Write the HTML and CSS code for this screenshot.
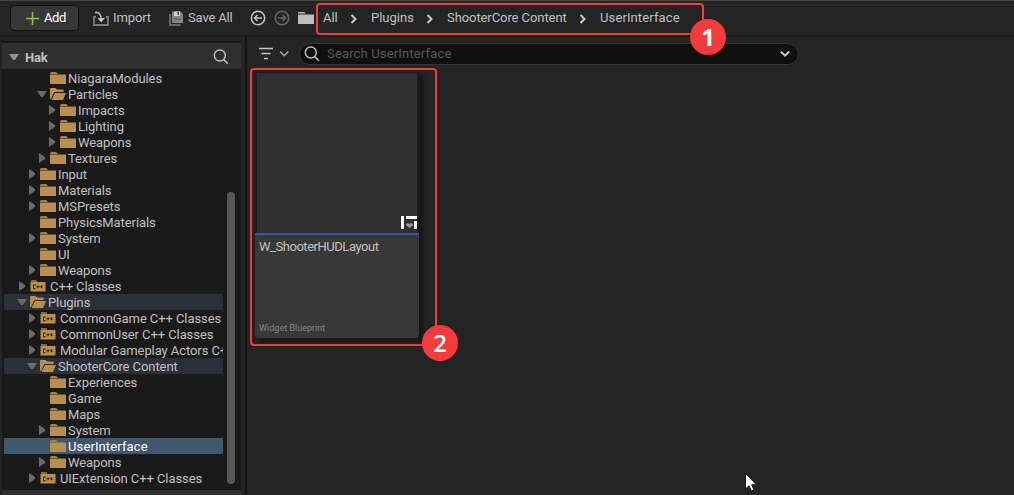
FILE: index.html
```html
<!DOCTYPE html>
<html lang="en">
<head>
<meta charset="utf-8">
<title>Content Browser</title>
<link rel="stylesheet" href="styles.css">
</head>
<body>
<svg class="defs" width="0" height="0">
  <symbol id="folder" viewBox="0 0 16 12"><path d="M0 1.3 1 0H6L7.6 1.3V2H0Z" fill="#a67d42"/><path d="M0 2.4H15.5L16 3V11.5L15.5 12H.5L0 11.5Z"/></symbol>
  <symbol id="open" viewBox="0 0 16 12"><path d="M0 11V.7L.7 0H5.6L7 1.5H13L13.7 2.2V4H4.3L1 11Z"/><path d="M5 5H16L13 12H1.5Z"/></symbol>
  <symbol id="cpp" viewBox="0 0 16 12"><path d="M1 0H6L7.5 2H1Z" fill="#8f6a36"/><path d="M.5 2H15.5V11.5H.5Z"/><path d="M5.7 5H3.5V8.7H5.7M6.5 6.8H9.5M8 5.3V8.3M10 6.8H13M11.5 5.3V8.3" fill="none" stroke="#33260f"/></symbol>
  <symbol id="right" viewBox="0 0 6 10"><path d="M0 0 6 4V6L0 10Z"/></symbol>
  <symbol id="down" viewBox="0 0 10 6"><path d="M0 0H10L6 6H4Z"/></symbol>
  <symbol id="chev" viewBox="0 0 8 10"><path d="M1.5 1 5.5 5 1.5 9" fill="none" stroke="#c8c8c8" stroke-width="2"/></symbol>
  <symbol id="lens" viewBox="0 0 16 16"><circle cx="6.8" cy="6.5" r="5.5" fill="none" stroke="#c2c2c2" stroke-width="1.4"/><path d="m10.8 10.7 4 4" stroke="#c2c2c2" stroke-width="1.6"/></symbol>
</svg>
<div class="window">
  <header class="toolbar">
    <button class="add"><svg width="13" height="13"><path d="M6.5 0V13M0 6.5H13" stroke="#8bc24a" stroke-width="1.6"/></svg><span>Add</span></button>
    <div class="tool import"><svg width="16" height="15" viewBox="0 0 16 15"><path d="M3 6H1V14H15V6H13" fill="none" stroke="#7d7d7d" stroke-width="1.8"/><path d="M2 1.5C6 .8 8.2 3 8.2 9" fill="none" stroke="#c0c0c0" stroke-width="1.5"/><path d="M4.5 7H12L8.2 11.5Z" fill="#c0c0c0"/></svg><span>Import</span></div>
    <div class="tool save"><svg width="14" height="15" viewBox="0 0 14 15"><path d="M1 3V14H11.5" fill="none" stroke="#777" stroke-width="1.6"/><path d="M3 .5H11.5L14 3V12H3Z" fill="#858585"/><path d="M5 .5H11V5H5Z" fill="#d0d0d0"/><path d="M8.5 1H10V3.7H8.5Z" fill="#333"/><path d="M5 7.5H12V8.5H5Z" fill="#555"/></svg><span>Save All</span></div>
    <svg class="nav" width="16" height="16"><g fill="none" stroke="#c5c5c5" stroke-width="1.5"><circle cx="8" cy="8" r="6.7"/><path d="M12 8H4.7M7.5 5 4.5 8 7.5 11"/></g></svg>
    <svg class="nav forward" width="16" height="16"><g fill="none" stroke="#666" stroke-width="1.5"><circle cx="8" cy="8" r="6.7"/><path d="M4 8H11.3M8.5 5 11.5 8 8.5 11"/></g></svg>
    <svg class="path-folder" width="16" height="12"><path d="M0 0H6.3L7.5 1.5H0ZM0 2.4H16V12H0Z" fill="#bdbdbd"/></svg>
    <nav class="crumbs">
      <span class="c-all">All</span><svg width="8" height="10"><use href="#chev"/></svg>
      <span class="c-plugins">Plugins</span><svg width="8" height="10"><use href="#chev"/></svg>
      <span class="c-content">ShooterCore Content</span><svg width="8" height="10"><use href="#chev"/></svg>
      <span class="c-ui">UserInterface</span>
    </nav>
  </header>
  <div class="body">
    <aside class="side">
      <div class="side-head"><svg width="10" height="6"><use href="#down"/></svg><b>Hak</b><svg class="find" width="16" height="16"><use href="#lens"/></svg></div>
      <div class="tree-wrap">
        <ul class="tree">
          <li class="row d4"><i></i><svg class="f"><use href="#folder"/></svg><span>NiagaraModules</span></li>
          <li class="row d4"><i><svg class="dn"><use href="#down"/></svg></i><svg class="f"><use href="#open"/></svg><span>Particles</span></li>
          <li class="row d5"><i><svg class="rt"><use href="#right"/></svg></i><svg class="f"><use href="#folder"/></svg><span>Impacts</span></li>
          <li class="row d5"><i><svg class="rt"><use href="#right"/></svg></i><svg class="f"><use href="#folder"/></svg><span>Lighting</span></li>
          <li class="row d5"><i><svg class="rt"><use href="#right"/></svg></i><svg class="f"><use href="#folder"/></svg><span>Weapons</span></li>
          <li class="row d4"><i><svg class="rt"><use href="#right"/></svg></i><svg class="f"><use href="#folder"/></svg><span>Textures</span></li>
          <li class="row d3"><i><svg class="rt"><use href="#right"/></svg></i><svg class="f"><use href="#folder"/></svg><span>Input</span></li>
          <li class="row d3"><i><svg class="rt"><use href="#right"/></svg></i><svg class="f"><use href="#folder"/></svg><span>Materials</span></li>
          <li class="row d3"><i><svg class="rt"><use href="#right"/></svg></i><svg class="f"><use href="#folder"/></svg><span>MSPresets</span></li>
          <li class="row d3"><i></i><svg class="f"><use href="#folder"/></svg><span>PhysicsMaterials</span></li>
          <li class="row d3"><i><svg class="rt"><use href="#right"/></svg></i><svg class="f"><use href="#folder"/></svg><span>System</span></li>
          <li class="row d3"><i></i><svg class="f"><use href="#folder"/></svg><span>UI</span></li>
          <li class="row d3"><i><svg class="rt"><use href="#right"/></svg></i><svg class="f"><use href="#folder"/></svg><span>Weapons</span></li>
          <li class="row d2 cpp"><i><svg class="rt"><use href="#right"/></svg></i><svg class="f"><use href="#cpp"/></svg><span>C++ Classes</span></li>
          <li class="row d2 parent"><i><svg class="dn"><use href="#down"/></svg></i><svg class="f"><use href="#open"/></svg><span>Plugins</span></li>
          <li class="row d3 cpp"><i><svg class="rt"><use href="#right"/></svg></i><svg class="f"><use href="#cpp"/></svg><span>CommonGame C++ Classes</span></li>
          <li class="row d3 cpp"><i><svg class="rt"><use href="#right"/></svg></i><svg class="f"><use href="#cpp"/></svg><span>CommonUser C++ Classes</span></li>
          <li class="row d3 cpp"><i><svg class="rt"><use href="#right"/></svg></i><svg class="f"><use href="#cpp"/></svg><span>Modular Gameplay Actors C++</span></li>
          <li class="row d3 parent"><i><svg class="dn"><use href="#down"/></svg></i><svg class="f"><use href="#open"/></svg><span>ShooterCore Content</span></li>
          <li class="row d4"><i></i><svg class="f"><use href="#folder"/></svg><span>Experiences</span></li>
          <li class="row d4"><i></i><svg class="f"><use href="#folder"/></svg><span>Game</span></li>
          <li class="row d4"><i></i><svg class="f"><use href="#folder"/></svg><span>Maps</span></li>
          <li class="row d4"><i><svg class="rt"><use href="#right"/></svg></i><svg class="f"><use href="#folder"/></svg><span>System</span></li>
          <li class="row d4 selected"><i></i><svg class="f"><use href="#folder"/></svg><span>UserInterface</span></li>
          <li class="row d4"><i><svg class="rt"><use href="#right"/></svg></i><svg class="f"><use href="#folder"/></svg><span>Weapons</span></li>
          <li class="row d3 cpp"><i><svg class="rt"><use href="#right"/></svg></i><svg class="f"><use href="#cpp"/></svg><span>UIExtension C++ Classes</span></li>
        </ul>
        <div class="scroll"></div>
      </div>
      <div class="side-foot"></div>
    </aside>
    <main class="content">
      <div class="search-row">
        <svg class="filter" width="30" height="14"><path d="M0 1.5H14M2.5 6.5H11.5M5 11.5H9" stroke="#c5c5c5" stroke-width="1.7"/><path d="m21 4.5 4.2 4.2 4.2-4.2" fill="none" stroke="#aaa" stroke-width="1.5"/></svg>
        <div class="search"><svg width="16" height="16"><use href="#lens"/></svg><span>Search UserInterface</span><svg class="arrow" width="10" height="8"><path d="m.8 1.5 4.2 4.2 4.2-4.2" fill="none" stroke="#c8c8c8" stroke-width="2"/></svg></div>
      </div>
      <article class="tile">
        <div class="thumb"><svg width="16" height="13"><path d="M0 0H3V13H0ZM5 0H16V3H5ZM13 5H16V13H13Z" fill="#fff"/><path d="M5 8.2 6.5 7 8.5 7.8 10.5 7 12 8.2V9.3L8.5 12 5 9.3Z" fill="#969696"/></svg></div>
        <div class="info"><span class="name">W_ShooterHUDLayout</span><small>Widget Blueprint</small></div>
      </article>
    </main>
  </div>
  <div class="mark mark-path"></div>
  <div class="mark mark-tile"></div>
  <div class="badge one">1</div>
  <div class="badge two">2</div>
  <svg class="cursor" width="12" height="19" viewBox="0 0 12 19"><path d="M.5.5V16L4 12.8 6.3 18 9 17 6.8 11.8H11.5Z" fill="#fff" stroke="#111"/></svg>
</div>
</body>
</html>
```
FILE: styles.css
```css
* { box-sizing: border-box; }
body { margin: 0; background: #242424; color: #c0c0c0; font: 13px/16px Roboto, sans-serif; letter-spacing: -.08px; }
svg { display: block; flex: none; }
.defs { position: absolute; }
.window { position: relative; width: 1014px; height: 495px; overflow: hidden; display: flex; flex-direction: column; }
.toolbar { height: 37px; flex: none; display: flex; align-items: center; border-top: 1px solid #464646; border-bottom: 2px solid #1a1a1a; padding-left: 10px; white-space: nowrap; }
.add { width: 69px; height: 26px; display: flex; align-items: center; gap: 5px; padding: 0 0 0 15px; background: #383838; border: 1px solid #111; border-radius: 4px; color: #fff; font: inherit; letter-spacing: -.4px; }
.tool { display: flex; align-items: center; }
.import { margin-left: 14px; gap: 4px; width: 76px; letter-spacing: -.1px; }
.save { gap: 5px; width: 81px; letter-spacing: -.15px; }
.nav.forward { margin-left: 8px; }
.path-folder { margin-left: 8px; }
.crumbs { display: flex; align-items: center; margin-left: 9px; }
.crumbs svg { margin-top: 1px; }
.c-all { width: 27px; }
.c-plugins { width: 55px; margin-left: 13px; letter-spacing: 0; }
.c-content { width: 132px; margin-left: 13px; }
.c-ui { margin-left: 13px; letter-spacing: .12px; }
.body { flex: 1; display: flex; min-height: 0; }
.side { width: 247px; display: flex; flex-direction: column; padding: 4px 4px 0 2px; border-right: 2px solid #151515; }
.side-head { height: 28px; flex: none; display: flex; align-items: center; gap: 6px; padding: 2px 12px 0 7px; background: #2f2f2f; border-top: 2px solid #151515; fill: #909090; }
.side-head b { font-weight: 700; letter-spacing: -.2px; color: #c0c0c0; padding-top: 1px; }
.find { margin-left: auto; }
.tree-wrap { height: 420px; flex: none; display: flex; gap: 4px; padding: 1px 0 0 2px; background: #1a1a1a; }
.tree { width: 219px; margin: 0; padding: 0; list-style: none; overflow: hidden; }
.row { height: 16px; display: flex; align-items: center; white-space: nowrap; }
.row i { width: 12px; height: 16px; flex: none; display: flex; align-items: center; justify-content: center; margin-right: 2px; fill: #6a6a6a; }
.rt { width: 6px; height: 10px; }
.dn { width: 10px; height: 6px; }
.f { width: 16px; height: 12px; fill: #b88f51; }
.row span { margin-left: 2px; padding-top: 2px; }
.row.cpp span { margin-left: 4px; }
.d2 { padding-left: 12px; }
.d3 { padding-left: 22px; }
.d4 { padding-left: 32px; }
.d5 { padding-left: 42px; }
.parent { background: #2a3038; }
.selected { background: #40576f; color: #fff; letter-spacing: .12px; }
.scroll { width: 8px; height: 292px; margin-top: 122px; border-radius: 4px; background: #575757; }
.side-foot { flex: 1; background: #2f2f2f; border-top: 1px solid #151515; }
.content { flex: 1; padding: 6px 0 0 8px; }
.search-row { display: flex; align-items: center; height: 22px; }
.filter { margin: 0 10px 0 4px; }
.search { width: 500px; height: 22px; display: flex; align-items: center; padding: 0 8px 0 4px; background: #0f0f0f; border: 1px solid #353535; border-radius: 11px; color: #5a5a5a; }
.search span { margin-left: 7px; letter-spacing: .16px; }
.arrow { margin-left: auto; }
.tile { width: 164px; height: 266px; margin-top: 7px; border-radius: 0 0 4px 4px; box-shadow: 4px 3px 5px #151515; }
.thumb { height: 161px; display: flex; align-items: flex-end; justify-content: flex-end; padding: 0 0 4px; background: #303030; border: solid #1b1b1b; border-width: 1px 2px 0; }
.info { height: 105px; display: flex; flex-direction: column; justify-content: space-between; padding: 4px 4px 3px; background: #383838; border-top: 2px solid #2d59b3; border-radius: 0 0 4px 4px; }
.name { letter-spacing: -.46px; }
.info small { font-size: 9px; line-height: 14px; color: #858585; letter-spacing: .02px; }
.mark { position: absolute; border: 2px solid #f43b3b; border-radius: 4px; }
.mark-path { left: 316px; top: 3px; width: 388px; height: 32px; }
.mark-tile { left: 250px; top: 68px; width: 187px; height: 278px; }
.badge { position: absolute; width: 36px; height: 36px; border-radius: 50%; background: #f43b3b; color: #fff; display: flex; align-items: center; justify-content: center; font: 600 24px/36px "Open Sans", sans-serif; letter-spacing: 0; }
.one { left: 690px; top: 19px; font-weight: 700; }
.two { left: 422px; top: 325px; }
.cursor { position: absolute; left: 745px; top: 473px; }
```
